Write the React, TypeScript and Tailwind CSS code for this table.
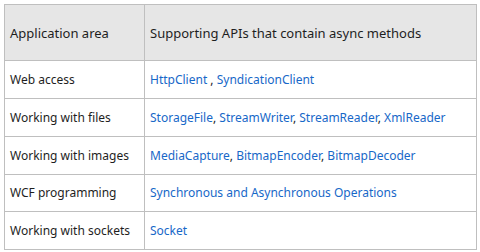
const rows: { area: string; apis: string[]; sep?: string }[] = [
  { area: 'Web access', apis: ['HttpClient', 'SyndicationClient'], sep: ' , ' },
  { area: 'Working with files', apis: ['StorageFile', 'StreamWriter', 'StreamReader', 'XmlReader'] },
  { area: 'Working with images', apis: ['MediaCapture', 'BitmapEncoder', 'BitmapDecoder'] },
  { area: 'WCF programming', apis: ['Synchronous and Asynchronous Operations'] },
  { area: 'Working with sockets', apis: ['Socket'] },
];

const cell = 'border border-[#bfbfbf] pl-[5px] py-0 text-left font-normal align-middle';

export default function App() {
  return (
    <div className="w-[480px] h-[252px] bg-white pt-[4px] pl-[4px] font-['Noto_Sans',sans-serif] text-[12px] leading-[18px] text-[#1e1e1e]">
      <table className="w-[473px] table-fixed border-collapse border border-[#bfbfbf]">
        <thead>
          <tr className="bg-[#e6e6e6] text-[13px]">
            <th className={`${cell} w-[140px] h-[56px]`}>Application area</th>
            <th className={`${cell} h-[56px]`}>Supporting APIs that contain async methods</th>
          </tr>
        </thead>
        <tbody>
          {rows.map((r, i) => (
            <tr key={r.area}>
              <td className={`${cell} ${i === 3 ? 'h-[37px]' : 'h-[38px]'}`}>{r.area}</td>
              <td className={`${cell} ${i === 3 ? 'h-[37px]' : 'h-[38px]'}`}>
                {r.apis.map((a, j) => (
                  <span key={a}>
                    {j > 0 && <span>{r.sep ?? ', '}</span>}
                    <a href="#" className="text-[#1768c8]">{a}</a>
                  </span>
                ))}
              </td>
            </tr>
          ))}
        </tbody>
      </table>
    </div>
  );
}
